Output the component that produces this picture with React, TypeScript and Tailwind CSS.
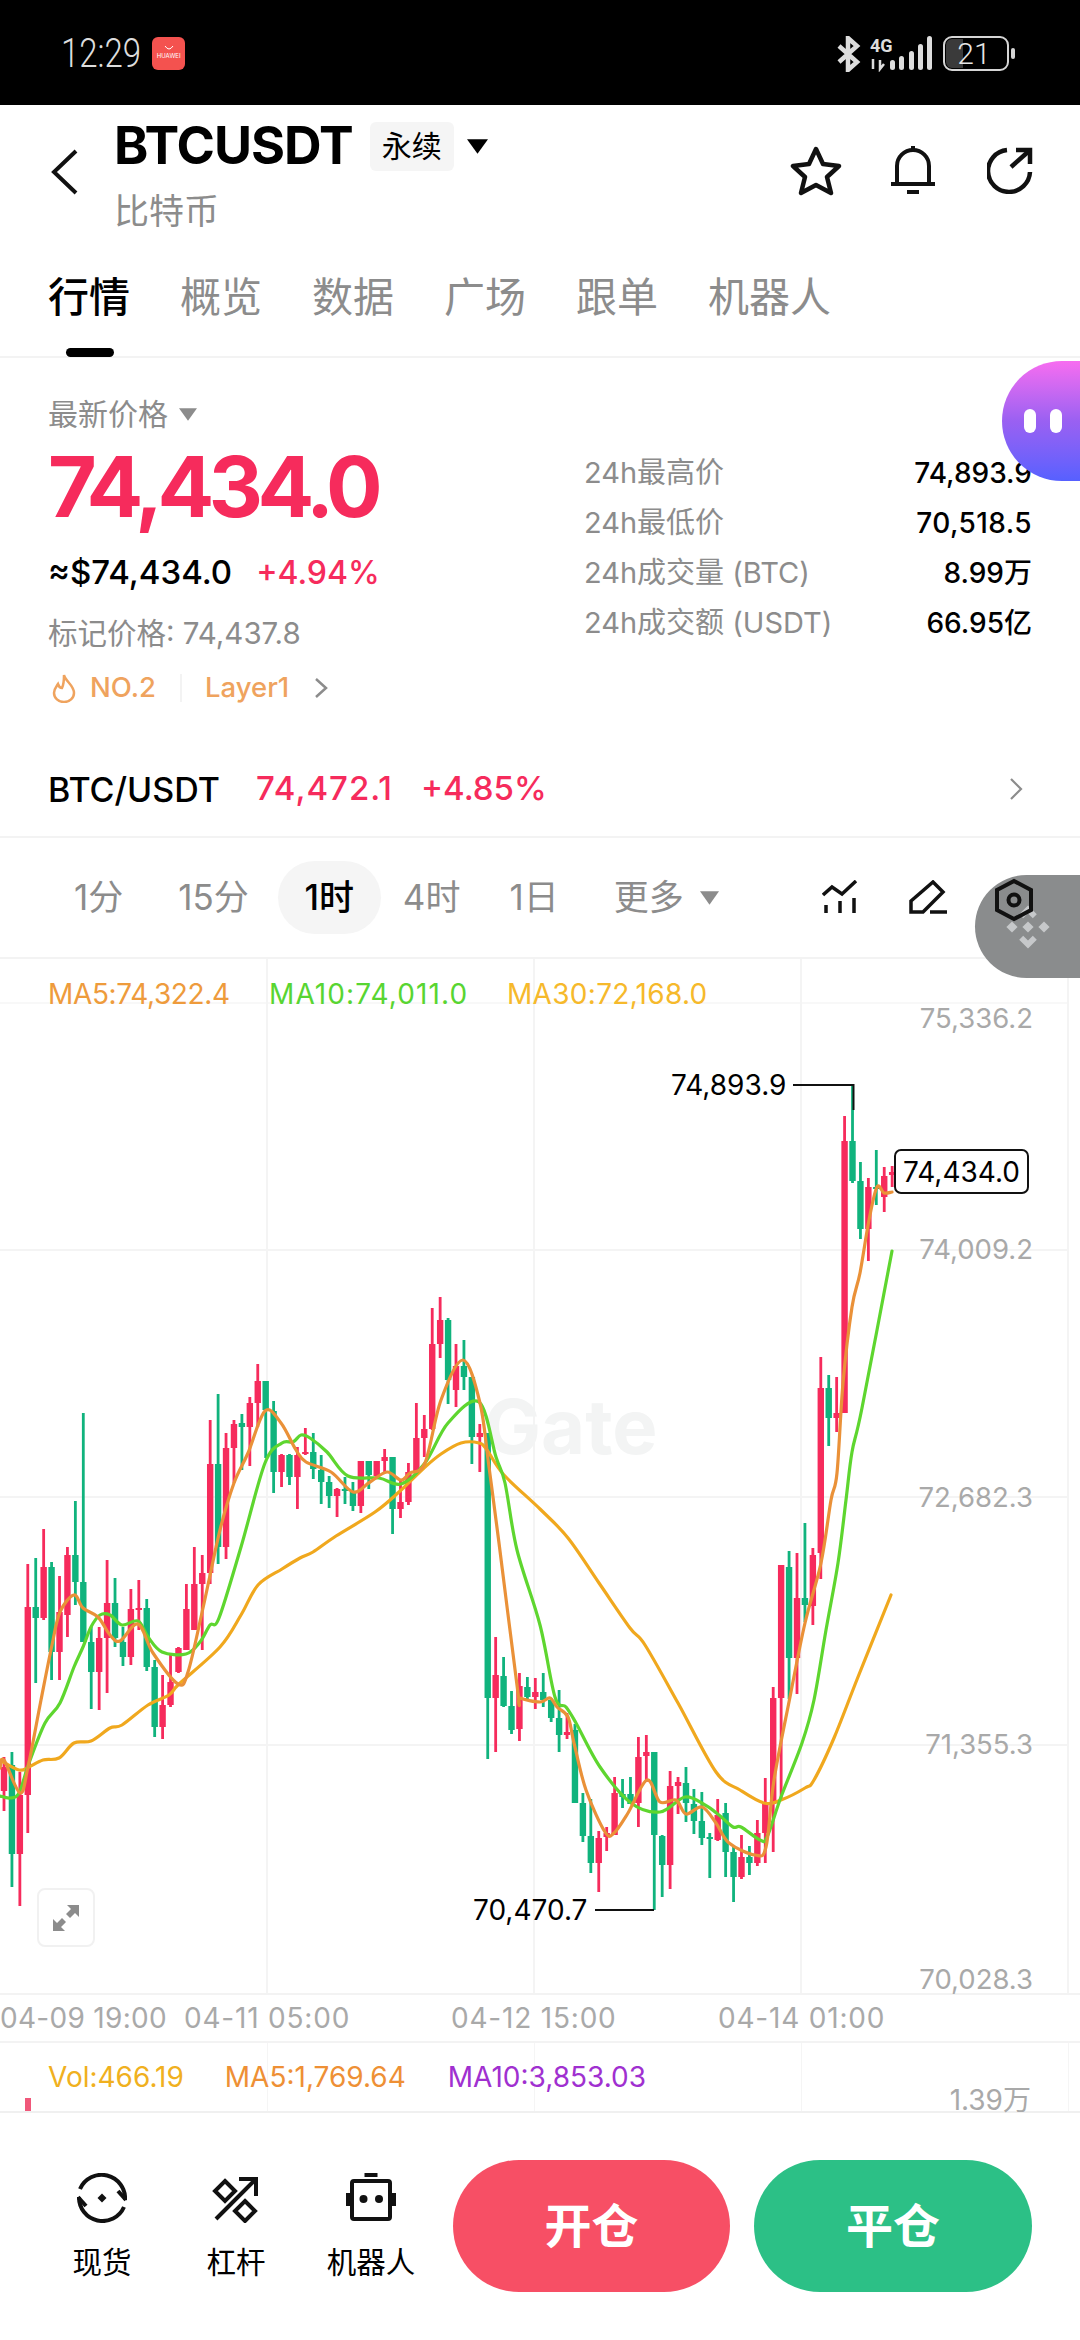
const RED = "#f62b5c";
const GREEN = "#10b37d";

// one candle per row: wick top, wick bottom, body top, body bottom, colour
const candles: [number, number, number, number, "r" | "g"][] = [
  [1757, 1811, 1767, 1791, "r"], [1752, 1887, 1765, 1854, "g"], [1772, 1906, 1795, 1854, "r"], [1564, 1833, 1607, 1795, "r"],
  [1558, 1683, 1607, 1618, "g"], [1529, 1620, 1567, 1618, "r"], [1562, 1680, 1567, 1652, "g"], [1576, 1680, 1612, 1652, "r"],
  [1547, 1637, 1555, 1615, "r"], [1501, 1605, 1555, 1582, "g"], [1413, 1642, 1582, 1642, "g"], [1627, 1709, 1642, 1672, "g"],
  [1627, 1710, 1638, 1672, "r"], [1560, 1693, 1603, 1638, "r"], [1578, 1647, 1603, 1638, "g"], [1627, 1666, 1642, 1657, "g"],
  [1589, 1665, 1609, 1657, "r"], [1580, 1630, 1608, 1610, "r"], [1599, 1671, 1608, 1667, "g"], [1660, 1737, 1667, 1727, "g"],
  [1675, 1739, 1705, 1727, "r"], [1653, 1707, 1682, 1705, "r"], [1647, 1673, 1648, 1672, "r"], [1584, 1650, 1609, 1650, "r"],
  [1547, 1630, 1584, 1630, "r"], [1555, 1650, 1573, 1584, "r"], [1420, 1584, 1464, 1573, "r"], [1394, 1564, 1464, 1547, "g"],
  [1433, 1559, 1448, 1547, "r"], [1420, 1483, 1424, 1448, "r"], [1414, 1470, 1423, 1427, "g"], [1397, 1466, 1403, 1427, "r"],
  [1364, 1427, 1381, 1403, "r"], [1381, 1458, 1381, 1410, "g"], [1401, 1493, 1411, 1472, "g"], [1454, 1487, 1455, 1472, "r"],
  [1454, 1485, 1455, 1477, "g"], [1447, 1509, 1455, 1477, "r"], [1428, 1455, 1452, 1454, "r"], [1433, 1479, 1452, 1469, "g"],
  [1455, 1504, 1470, 1482, "g"], [1476, 1508, 1482, 1496, "g"], [1488, 1517, 1489, 1496, "r"], [1477, 1504, 1489, 1490, "g"],
  [1482, 1511, 1492, 1506, "g"], [1461, 1513, 1461, 1506, "r"], [1461, 1489, 1461, 1475, "g"], [1461, 1477, 1461, 1476, "r"],
  [1449, 1473, 1457, 1461, "r"], [1457, 1534, 1457, 1509, "g"], [1480, 1518, 1502, 1509, "r"], [1463, 1505, 1472, 1502, "r"],
  [1403, 1470, 1438, 1472, "r"], [1415, 1457, 1429, 1438, "r"], [1308, 1430, 1344, 1429, "r"], [1297, 1358, 1320, 1344, "r"],
  [1318, 1404, 1320, 1380, "g"], [1344, 1407, 1366, 1390, "r"], [1340, 1390, 1366, 1377, "g"], [1377, 1464, 1377, 1437, "g"],
  [1424, 1472, 1433, 1437, "r"], [1433, 1759, 1433, 1698, "g"], [1637, 1752, 1675, 1698, "r"], [1657, 1707, 1676, 1706, "g"],
  [1691, 1734, 1706, 1730, "g"], [1673, 1741, 1686, 1729, "r"], [1677, 1700, 1687, 1697, "g"], [1678, 1709, 1692, 1697, "r"],
  [1673, 1707, 1692, 1700, "g"], [1698, 1722, 1700, 1718, "g"], [1690, 1752, 1718, 1735, "g"], [1713, 1739, 1732, 1735, "r"],
  [1724, 1803, 1730, 1803, "g"], [1793, 1842, 1803, 1836, "g"], [1799, 1873, 1836, 1863, "g"], [1831, 1892, 1838, 1863, "r"],
  [1827, 1851, 1833, 1837, "r"], [1777, 1835, 1793, 1835, "r"], [1779, 1808, 1794, 1797, "g"], [1777, 1804, 1794, 1804, "g"],
  [1737, 1827, 1757, 1803, "r"], [1735, 1782, 1752, 1756, "r"], [1752, 1910, 1752, 1835, "g"], [1835, 1897, 1836, 1865, "g"],
  [1771, 1889, 1786, 1865, "r"], [1777, 1814, 1782, 1786, "r"], [1767, 1822, 1783, 1803, "g"], [1789, 1834, 1804, 1821, "g"],
  [1792, 1845, 1821, 1838, "g"], [1833, 1878, 1837, 1839, "g"], [1799, 1841, 1815, 1840, "r"], [1803, 1877, 1813, 1852, "g"],
  [1847, 1902, 1852, 1877, "g"], [1835, 1879, 1857, 1877, "r"], [1846, 1875, 1857, 1863, "g"], [1820, 1866, 1833, 1863, "r"],
  [1778, 1863, 1804, 1833, "r"], [1687, 1852, 1698, 1804, "r"], [1565, 1800, 1565, 1698, "r"], [1551, 1699, 1567, 1658, "g"],
  [1553, 1694, 1598, 1658, "r"], [1523, 1622, 1598, 1605, "g"], [1548, 1625, 1555, 1606, "r"], [1357, 1579, 1388, 1553, "r"],
  [1375, 1446, 1388, 1418, "g"], [1377, 1432, 1413, 1418, "r"], [1116, 1413, 1141, 1413, "r"], [1085, 1183, 1141, 1181, "g"],
  [1162, 1239, 1181, 1229, "g"], [1178, 1261, 1187, 1229, "r"], [1150, 1205, 1187, 1188, "g"], [1167, 1212, 1176, 1197, "r"],
  [1166, 1187, 1172, 1175, "r"],
];

const ma5 =
  "0,1768 4,1760 20,1793 28,1767 41,1700 52,1645 60,1612 74,1595 83,1608 98,1617 110,1635 120,1641 138,1624 153,1653 178,1684 188,1672 203,1608 220,1530 234,1483 248,1453 265,1411 281,1423 296,1450 306,1462 331,1472 353,1492 370,1482 387,1472 401,1480 410,1473 425,1463 441,1400 463,1360 480,1403 489,1467 499,1543 518,1693 520,1698 540,1702 550,1698 557,1707 568,1717 574,1743 586,1790 605,1832 614,1833 628,1813 647,1780 660,1802 676,1800 686,1814 702,1807 716,1823 729,1843 755,1855 766,1847 774,1780 790,1697 805,1623 821,1563 831,1500 837,1473 843,1383 852,1307 860,1273 869,1220 877,1187 884,1193 892,1192";
const ma10 =
  "0,1796 10,1798 19,1793 29,1763 45,1723 60,1703 74,1667 83,1647 91,1627 100,1615 110,1615 122,1625 138,1621 148,1637 162,1652 186,1654 200,1642 210,1625 219,1618 241,1547 265,1463 282,1443 293,1442 301,1435 310,1438 327,1452 348,1476 379,1478 401,1484 425,1463 448,1423 479,1402 496,1457 505,1483 517,1550 540,1625 555,1697 566,1707 576,1723 600,1767 631,1803 660,1812 685,1797 705,1805 719,1815 733,1827 741,1827 760,1840 767,1837 781,1797 802,1743 814,1700 826,1630 838,1563 846,1500 852,1452 862,1408 892,1251";
const ma30 =
  "0,1760 19,1770 29,1767 43,1760 59,1758 74,1743 91,1741 110,1728 122,1725 148,1705 169,1695 179,1684 220,1647 241,1615 258,1585 282,1569 300,1558 313,1552 336,1536 375,1512 399,1492 424,1468 441,1454 461,1443 479,1443 487,1450 504,1475 540,1509 568,1538 599,1583 630,1628 645,1645 678,1703 716,1772 740,1790 764,1803 781,1800 805,1788 814,1780 834,1738 858,1677 891,1595";

// catmull-rom through the sampled points so the averages bend like the real chart
function smooth(points: string) {
  const p = points.split(" ").map((s) => s.split(",").map(Number));
  let d = `M${p[0][0]} ${p[0][1]}`;
  for (let i = 0; i < p.length - 1; i++) {
    const a = p[Math.max(i - 1, 0)];
    const b = p[i];
    const c = p[i + 1];
    const e = p[Math.min(i + 2, p.length - 1)];
    d += `C${b[0] + (c[0] - a[0]) / 6} ${b[1] + (c[1] - a[1]) / 6} ${c[0] - (e[0] - b[0]) / 6} ${c[1] - (e[1] - b[1]) / 6} ${c[0]} ${c[1]}`;
  }
  return d;
}

const priceAxis: [string, number][] = [
  ["75,336.2", 1018],
  ["74,009.2", 1249],
  ["72,682.3", 1497],
  ["71,355.3", 1744],
  ["70,028.3", 1979],
];

function Triangle({ className }: { className: string }) {
  return (
    <svg viewBox="0 0 20 14" className={className} fill="currentColor">
      <polygon points="0,0 20,0 10,14" />
    </svg>
  );
}

function Chart() {
  return (
    <div className="relative h-[1034px] w-full shrink-0">
      <svg viewBox="0 959 1080 1034" className="block h-[1034px] w-[1080px] overflow-visible">
        <g stroke="#f4f4f4" strokeWidth="2">
          {[1250, 1497, 1745].map((y) => (
            <line key={y} x1="0" x2="1068" y1={y} y2={y} />
          ))}
          <line x1="0" x2="1068" y1="1003" y2="1003" stroke="#f8f8f8" />
          {[267, 534, 801, 1068].map((x) => (
            <line key={x} x1={x} x2={x} y1="959" y2="1993" />
          ))}
        </g>
        <text x="484" y="1454" fontSize="76" fontWeight="700" fill="#f3f4f4">
          Gate
        </text>
        {candles.map(([wt, wb, bt, bb, c], i) => {
          const x = 4 + i * 7.93;
          const color = c === "r" ? RED : GREEN;
          return (
            <g key={i} fill={color}>
              <rect x={x - 1.4} y={wt} width="2.8" height={wb - wt} />
              <rect x={x - 3.2} y={bt} width="6.4" height={Math.max(bb - bt, 2)} />
            </g>
          );
        })}
        <g fill="none" strokeWidth="3.2" strokeLinejoin="round" strokeLinecap="round">
          <path d={smooth(ma30)} stroke="#f0a81e" />
          <path d={smooth(ma10)} stroke="#5ed62f" />
          <path d={smooth(ma5)} stroke="#ea9138" />
        </g>

        <path d="M793 1085H853.5V1110" fill="none" stroke="#111" strokeWidth="2" />
        <path d="M595 1910H654" fill="none" stroke="#111" strokeWidth="2" />
        <g fontSize="28" fill="#000">
          <text x="671" y="1095">74,893.9</text>
          <text x="473" y="1920">70,470.7</text>
        </g>
        <g fontSize="27.5" fill="#a9a9a9" textAnchor="end">
          {priceAxis.map(([label, y]) => (
            <text key={label} x="1033" y={y + 10}>{label}</text>
          ))}
        </g>
        <rect x="895" y="1150" width="133" height="43" rx="6" fill="#fff" stroke="#111" strokeWidth="2" />
        <text x="961.5" y="1182" fontSize="28" fill="#000" textAnchor="middle">74,434.0</text>
      </svg>

      <div className="absolute left-12 top-[15px] flex text-[28px] leading-[40px]">
        <span className="w-[221px] tracking-[-0.35px] text-[#ee9b3c]">MA5:74,322.4</span>
        <span className="w-[238px] tracking-[1.1px] text-[#58d532]">MA10:74,011.0</span>
        <span className="tracking-[0.3px] text-[#f6b92b]">MA30:72,168.0</span>
      </div>

      <div className="absolute left-[37px] top-[929px] flex h-[59px] w-[58px] items-center justify-center rounded-lg border-2 border-[#f1f1f1] bg-white">
        <svg viewBox="0 0 28 28" className="h-7 w-7" fill="#8c8c8c">
          <polygon points="15,1 27,1 27,13 23,9 18,14 14,10 19,5" />
          <polygon points="1,27 1,15 5,19 10,14 14,18 9,23 13,27" />
        </svg>
      </div>
    </div>
  );
}

function IconSpot() {
  return (
    <svg viewBox="0 0 50 50" className="h-[50px] w-[50px]" fill="none" stroke="#111" strokeWidth="4">
      <path d="M3 16A23.5 23.5 0 0 1 48 27" />
      <path d="M41 18l8 9" />
      <path d="M47 34A23.5 23.5 0 0 1 2 24" />
      <path d="M9 33l-8-9" />
      <polygon points="25,20.5 29.5,25 25,29.5 20.5,25" fill="#111" stroke="none" />
    </svg>
  );
}

function IconLever() {
  return (
    <svg viewBox="0 0 50 50" className="h-[50px] w-[50px]" fill="none" stroke="#111" strokeWidth="4">
      <path d="M5 46L44 7" />
      <path d="M28 6H45V23" />
      <polygon points="14,8 24,18 14,28 4,18" />
      <polygon points="34,28 44,38 34,48 24,38" />
    </svg>
  );
}

function IconBot() {
  return (
    <svg viewBox="0 0 50 50" className="h-[50px] w-[50px]" fill="#111">
      <rect x="18.5" y="0" width="13" height="4" />
      <rect x="6" y="8" width="38" height="38" rx="2" fill="none" stroke="#111" strokeWidth="4" />
      <rect x="0" y="20" width="4" height="13" />
      <rect x="46" y="20" width="4" height="13" />
      <circle cx="17.5" cy="26" r="4" />
      <circle cx="33" cy="26" r="4" />
    </svg>
  );
}

export default function App() {
  return (
    <div className="relative flex h-[2340px] w-[1080px] flex-col overflow-hidden bg-white font-[family-name:Inter,'Noto_Sans_CJK_SC',sans-serif] text-black">
      {/* status bar */}
      <div className="flex h-[105px] shrink-0 items-start justify-between bg-black pl-[61px] pr-[62px] pt-9">
        <div className="flex items-center gap-[11px]">
          <span className="scale-y-125 font-[family-name:Roboto,sans-serif] text-[33px] font-light leading-[34px] text-[#dddddd]">12:29</span>
          <div className="flex h-[33px] w-[33px] flex-col items-center justify-center rounded-md bg-[#f4524f]">
            <svg viewBox="0 0 12 6" className="h-1.5 w-3" fill="none" stroke="#fff" strokeWidth="1">
              <path d="M2 1Q6 7 10 1" />
            </svg>
            <span className="text-[6px] leading-[10px] text-white">HUAWEI</span>
          </div>
        </div>
        <svg viewBox="0 0 181 36" className="h-9 w-[181px]">
          <path d="M2 10L20 26L11 34V2L20 10L2 26" fill="none" stroke="#dddddd" strokeWidth="4.5" />
          <text x="33" y="16" fontSize="18" fontWeight="700" fill="#dddddd" fontFamily="Roboto">4G</text>
          <path d="M36 23V33M43 24V33L47 28" fill="none" stroke="#dddddd" strokeWidth="2.5" />
          <g fill="#dddddd">
            <rect x="53" y="24" width="5" height="10" rx="2.5" />
            <rect x="62" y="20" width="5" height="14" rx="2.5" />
            <rect x="72" y="15" width="5" height="19" rx="2.5" />
            <rect x="81" y="8" width="5" height="26" rx="2.5" />
            <rect x="90" y="0" width="5" height="34" rx="2.5" />
          </g>
          <rect x="107" y="1" width="64" height="33" rx="8" fill="none" stroke="#d5d5d5" strokeWidth="2" />
          <path d="M115 3H126V32H115A6 6 0 0 1 109 26V9A6 6 0 0 1 115 3Z" fill="#3a3a3a" />
          <text x="137" y="28" fontSize="30" fill="#e6e6e6" fontFamily="Roboto" fontWeight="300" textAnchor="middle">21</text>
          <rect x="174" y="12" width="4" height="11" rx="2" fill="#d5d5d5" />
        </svg>
      </div>

      {/* header */}
      <div className="relative flex h-[155px] shrink-0 pl-[50px] pr-[47px]">
        <svg viewBox="0 0 28 46" className="mt-11 h-[46px] w-[28px]" fill="none" stroke="#111" strokeWidth="4">
          <path d="M26 2L4 23L26 44" />
        </svg>
        <div className="ml-[36px] pt-[12px]">
          <div className="flex h-[58px] items-center">
            <span className="text-[52px] font-bold leading-[58px] tracking-[-1px]">BTCUSDT</span>
            <span className="ml-[17px] flex h-[49px] w-[84px] items-center justify-center rounded-md bg-[#f5f5f5] text-[30px]">永续</span>
            <Triangle className="ml-[13px] h-[15px] w-[21px]" />
          </div>
          <div className="mt-[16px] text-[35px] leading-[40px] text-[#8c8c8c]">比特币</div>
        </div>
        <div className="ml-auto flex items-start">
          <svg viewBox="0 0 52 50" className="mr-[49px] mt-[41px] h-[50px] w-[52px]" fill="none" stroke="#111" strokeWidth="4.5" strokeLinejoin="round">
            <path d="M26 3L33 18L49 20L37 31L41 47L26 39L11 47L15 31L3 20L19 18Z" />
          </svg>
          <svg viewBox="0 0 44 50" className="mr-[52px] mt-[40px] h-[50px] w-[44px]" fill="none" stroke="#111" strokeWidth="4">
            <path d="M22 1V6" />
            <path d="M6 39V21A16 16 0 0 1 38 21V39" />
            <path d="M0 39H44" />
            <path d="M16 47H28" />
          </svg>
          <svg viewBox="0 0 46 48" className="mt-[41px] h-[48px] w-[46px]" fill="none" stroke="#111" strokeWidth="4.5">
            <path d="M20 4A21 21 0 1 0 43 26" />
            <path d="M24 21L42 5" />
            <path d="M29 4H43V18" />
          </svg>
        </div>
      </div>

      {/* tabs */}
      <div className="relative flex h-[98px] shrink-0 gap-[50px] border-b-2 border-[#f3f3f3] pl-[48px] pt-[12px] text-[41px] leading-[50px] text-[#8c8c8c]">
        <span className="font-medium text-black">行情</span>
        <span>概览</span>
        <span>数据</span>
        <span>广场</span>
        <span>跟单</span>
        <span>机器人</span>
        <div className="absolute left-[66px] top-[88px] h-[9px] w-[48px] rounded-full bg-black" />
      </div>

      {/* price block */}
      <div className="flex h-[384px] shrink-0 justify-between px-[48px]">
        <div className="w-[520px]">
          <div className="mt-[36px] flex h-[40px] items-center text-[30px] text-[#8c8c8c]">
            最新价格
            <Triangle className="ml-[11px] h-[13px] w-[18px]" />
          </div>
          <div className="mt-[3px] h-[100px] text-[84px] font-bold leading-[100px] tracking-[-5.5px] text-[#f62b5c]">74,434.0</div>
          <div className="mt-[14px] flex h-[44px] items-center">
            <span className="text-[33px] font-medium">≈$74,434.0</span>
            <span className="ml-[24px] text-[32px] font-medium text-[#f62b5c]">+4.94%</span>
          </div>
          <div className="mt-[18px] h-[40px] text-[29.5px] leading-[40px] text-[#8c8c8c]">标记价格: 74,437.8</div>
          <div className="mt-[15px] flex h-[40px] items-center text-[27.5px] font-medium text-[#efa35e]">
            <svg viewBox="0 0 24 30" className="ml-1 h-[30px] w-[24px]" fill="none" stroke="#efa35e" strokeWidth="2.5">
              <path d="M12 2C13 8 22 12 22 20A10 9 0 0 1 2 20C2 16 4 14 6 11C7 14 8 15 10 15C12 11 12 6 12 2Z" />
            </svg>
            <span className="ml-[14px]">NO.2</span>
            <div className="ml-[24px] h-[28px] w-[2px] bg-[#f3f3f3]" />
            <span className="ml-[23px]">Layer1</span>
            <svg viewBox="0 0 14 20" className="ml-[25px] h-5 w-[14px]" fill="none" stroke="#8c8c8c" strokeWidth="2.5">
              <path d="M2 1L12 10L2 19" />
            </svg>
          </div>
        </div>
        <div className="mt-[90px] flex h-[200px] w-[448px] flex-col text-[29px] leading-[50px]">
          <div className="flex justify-between"><span className="text-[#8c8c8c]">24h最高价</span><span className="text-[28px] font-medium">74,893.9</span></div>
          <div className="flex justify-between"><span className="text-[#8c8c8c]">24h最低价</span><span className="text-[28px] font-medium tracking-[0.4px]">70,518.5</span></div>
          <div className="flex justify-between"><span className="text-[#8c8c8c]">24h成交量 (BTC)</span><span className="text-[28px] font-medium">8.99万</span></div>
          <div className="flex justify-between"><span className="text-[#8c8c8c]">24h成交额 (USDT)</span><span className="text-[28px] font-medium">66.95亿</span></div>
        </div>
      </div>

      {/* spot row */}
      <div className="flex h-[96px] shrink-0 items-center border-b-2 border-[#f3f3f3] pl-[48px] pr-[57px] text-[33px] font-medium">
        <span className="text-[34px]">BTC/USDT</span>
        <span className="ml-[36px] tracking-[1px] text-[#f62b5c]">74,472.1</span>
        <span className="ml-[28px] text-[#f62b5c]">+4.85%</span>
        <svg viewBox="0 0 14 24" className="ml-auto h-6 w-[14px]" fill="none" stroke="#8c8c8c" strokeWidth="2.2">
          <path d="M2 2L12 12L2 22" />
        </svg>
      </div>

      {/* timeframe row */}
      <div className="relative flex h-[121px] shrink-0 items-center border-b-2 border-[#f3f3f3] text-[35px] text-[#8c8c8c]">
        <span className="ml-[74px]">1分</span>
        <span className="ml-[55px]">15分</span>
        <span className="ml-[29px] flex h-[73px] w-[103px] items-center justify-center rounded-full bg-[#f5f5f5] font-medium text-black">1时</span>
        <span className="ml-[22px]">4时</span>
        <span className="ml-[49px]">1日</span>
        <span className="ml-[55px]">更多</span>
        <Triangle className="ml-[16px] h-[14px] w-[19px]" />
        <svg viewBox="0 0 38 36" className="ml-[103px] h-9 w-[38px]" fill="none" stroke="#111" strokeWidth="3.5">
          <path d="M1 15L10 7L20 14L34 1" />
          <path d="M4 33V25M18 33V21M32 33V18" />
        </svg>
        <svg viewBox="0 0 38 36" className="ml-[49px] h-9 w-[38px]" fill="none" stroke="#111" strokeWidth="3.5">
          <path d="M24 2L34 12L14 32H2V21Z" />
          <path d="M21 32H38" />
        </svg>
      </div>

      {/* chart */}
      <Chart />

      {/* time axis */}
      <div className="flex h-[50px] shrink-0 items-center border-y-2 border-[#f3f3f3] text-[28px] text-[#a9a9a9]">
        <span className="w-[184px] whitespace-nowrap tracking-[0.3px]">04-09 19:00</span>
        <span className="w-[267px] whitespace-nowrap tracking-[0.8px]">04-11 05:00</span>
        <span className="w-[267px] whitespace-nowrap tracking-[0.8px]">04-12 15:00</span>
        <span className="whitespace-nowrap tracking-[0.8px]">04-14 01:00</span>
      </div>

      {/* volume */}
      <div className="relative flex h-[70px] shrink-0 border-b-2 border-[#f0f0f0] pl-[48px] pt-[14px] text-[28px] leading-[40px]">
        <div className="absolute left-[267px] top-0 h-full w-px bg-[#f5f5f5]" />
        <div className="absolute left-[534px] top-0 h-full w-px bg-[#f5f5f5]" />
        <div className="absolute left-[801px] top-0 h-full w-px bg-[#f5f5f5]" />
        <div className="absolute left-[1068px] top-0 h-full w-px bg-[#f5f5f5]" />
        <span className="relative text-[#f0b020]">Vol:466.19</span>
        <span className="relative ml-[41px] text-[#ee9035]">MA5:1,769.64</span>
        <span className="relative ml-[42px] text-[#a030d0]">MA10:3,853.03</span>
        <span className="absolute right-[49px] top-[41px] leading-[32px] text-[#a9a9a9]">1.39万</span>
        <div className="absolute bottom-0 left-[25px] h-[13px] w-[6px] bg-[#f0587a]" />
      </div>

      {/* bottom bar */}
      <div className="flex flex-1 items-start pl-[48px] pr-[48px] pt-[47px]">
        <div className="flex w-[405px] text-[29.5px] leading-[36px]">
          <div className="ml-[4px] flex w-[100px] flex-col items-center"><div className="mt-[13px] h-[50px]"><IconSpot /></div><span className="mt-[21px]">现货</span></div>
          <div className="ml-[34px] flex w-[100px] flex-col items-center"><div className="mt-[13px] h-[50px]"><IconLever /></div><span className="mt-[21px]">杠杆</span></div>
          <div className="ml-[35px] flex w-[100px] flex-col items-center"><div className="mt-[13px] h-[50px]"><IconBot /></div><span className="mt-[21px] whitespace-nowrap">机器人</span></div>
        </div>
        <button className="flex h-[132px] w-[277px] items-center justify-center rounded-full bg-[#f74f65] text-[47px] font-bold text-white">开仓</button>
        <button className="ml-[24px] flex h-[132px] w-[278px] items-center justify-center rounded-full bg-[#2cc086] text-[47px] font-bold text-white">平仓</button>
      </div>

      {/* floating widgets */}
      <div className="absolute left-[1002px] top-[361px] flex h-[120px] w-[78px] items-center gap-[14px] rounded-l-[62px] bg-gradient-to-b from-[#f76cf0] via-[#9a60f2] to-[#5660ff] pl-[22px]">
        <div className="h-[24px] w-[12px] rounded-full bg-white" />
        <div className="h-[24px] w-[12px] rounded-full bg-white" />
      </div>
      <div className="absolute left-[975px] top-[875px] h-[103px] w-[105px] rounded-l-[52px] bg-[#8a8c8d]">
        <svg viewBox="0 0 60 60" className="absolute left-[29px] top-[28px] h-12 w-12" fill="#c6c8ca">
          <polygon points="30,3 41,14 36,19 30,13 24,19 19,14" />
          <polygon points="30,57 41,46 36,41 30,47 24,41 19,46" />
          <polygon points="30,23 37,30 30,37 23,30" />
          <polygon points="10,23 17,30 10,37 3,30" />
          <polygon points="50,23 57,30 50,37 43,30" />
        </svg>
        <svg viewBox="0 0 40 44" className="absolute left-[19px] top-[3px] h-11 w-10" fill="none" stroke="#111" strokeWidth="4">
          <polygon points="20,3 37,12 37,32 20,41 3,32 3,12" />
          <circle cx="20" cy="22" r="5.5" />
        </svg>
      </div>
    </div>
  );
}
